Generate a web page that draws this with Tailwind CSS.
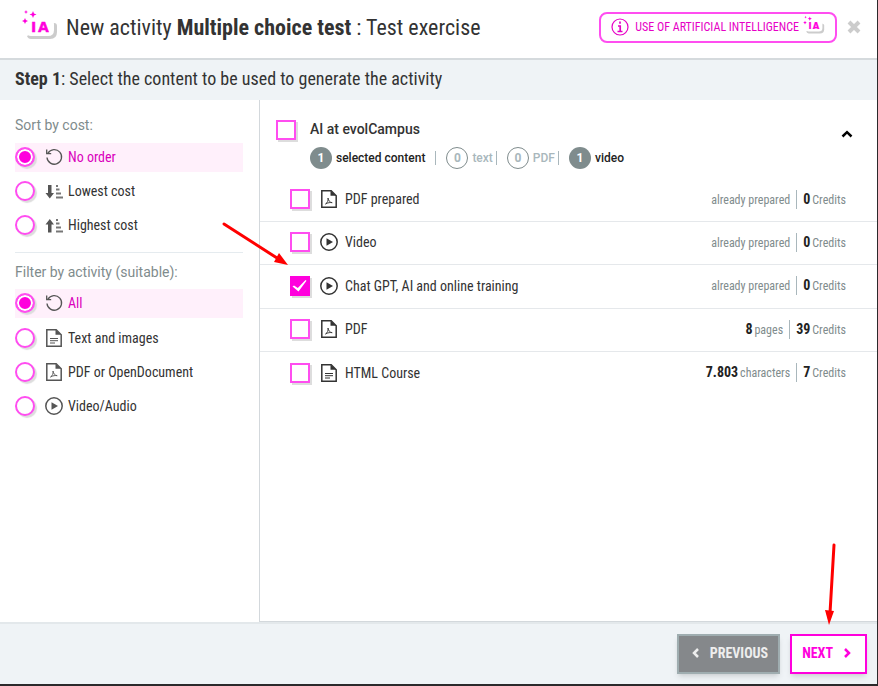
<!DOCTYPE html>
<html lang="en">

<head>
    <meta charset="UTF-8">
    <meta name="viewport" content="width=device-width, initial-scale=1.0">
    <script src="https://cdn.jsdelivr.net/npm/@tailwindcss/browser@4"></script>
    <title>New activity</title>
</head>

<body class="bg-[#2b292b] font-['Roboto_Condensed','Liberation_Sans_Narrow',Roboto,sans-serif] text-[#333]">
    <!-- shared icons -->
    <svg class="hidden">
        <symbol id="logo" viewBox="0 0 36 30">
            <path d="M29 13h3q3 0 3 3v6q0 7-7 7H9q-3 0-4-3z" fill="#ccc" />
            <path d="M9 11h20q3 0 3 3v6q0 6-6 6H9q-4 0-4-4v-7q0-4 4-4z" fill="#fff" />
            <path d="M11 1l1 2.500 2.500 1-2.500 1-1 2.500-1-2.500-2.500-1 2.500-1zM4 0l.6 1.400L6 2l-1.400.6L4 4l-.6-1.400L2 2l1.400-.6zM3 8l.9 2.100L6 11l-2.100.9L3 14l-.9-2.100L0 11l2.100-.9z" fill="#f0d" />
            <text y="22" class="font-['DejaVu_Sans'] font-bold text-[14px]" fill="#f0d" stroke="#f0d" stroke-width=".4"><tspan x="9">I</tspan><tspan x="16">A</tspan></text>
        </symbol>
        <symbol id="reset" viewBox="0 0 18 18" fill="none" stroke="currentColor" stroke-width="1.300">
            <path d="M3 5.200A7.300 7.300 0 1 1 2 9.500M1.700 1.500v4.200h4.500" />
        </symbol>
        <symbol id="down" viewBox="0 0 18 18" fill="currentColor">
            <path d="M3 3h3.500v8H9l-4.200 5.500L.5 11H3z" />
            <path d="M11 3h2v2h-2zM11 6.500h3.500v2H11zM11 10.500h5v2h-5zM11 14.500h7v2h-7z" fill-opacity=".8" />
        </symbol>
        <symbol id="up" viewBox="0 0 18 18" fill="currentColor">
            <path d="M3 16.500h3.500v-8H9L4.800 3 .5 8.500H3z" />
            <path d="M11 3h2v2h-2zM11 6.500h3.500v2H11zM11 10.500h5v2h-5zM11 14.500h7v2h-7z" fill-opacity=".8" />
        </symbol>
        <symbol id="doc" viewBox="0 0 18 18" fill="none" stroke="currentColor">
            <path d="M1.800.8h9.400l5 5v11.400H1.800z" stroke-width="1.500" />
            <path d="M10.500.8v5h5.700z" fill="currentColor" stroke="none" />
            <path d="M5 9.500h8M5 11.700h8M5 14h5" />
        </symbol>
        <symbol id="pdf" viewBox="0 0 18 18" fill="none" stroke="currentColor">
            <path d="M1.800.8h9.400l5 5v11.400H1.800z" stroke-width="1.500" />
            <path d="M10.500.8v5h5.700z" fill="currentColor" stroke="none" />
            <path d="M8 8c.6 2.800 1.600 4.200 4.200 4.700-2-.4-4.200-.1-6.700 1.300C7.400 12.800 8.400 10.800 8 8z" stroke-width=".9" />
        </symbol>
        <symbol id="play" viewBox="0 0 18 18">
            <circle cx="9" cy="9" r="8.200" fill="none" stroke="currentColor" stroke-width="1.500" />
            <path d="M6.500 5.200L13 9l-6.500 3.800z" fill="currentColor" />
        </symbol>
        <symbol id="tick" viewBox="0 0 20 20">
            <path d="M2.500 10.500l1.500-1 3.800 2.500L15.500 4l1 .8-8 10.700z" fill="#fff" />
        </symbol>
    </svg>

    <div class="flex flex-col min-h-screen pr-px pb-0.5">
        <header class="flex items-center h-15 pl-[22px] pr-4 bg-white border-b-2 border-[#d5dadd]">
            <svg class="w-9 h-[30px] mr-2 -mt-2"><use href="#logo" /></svg>
            <h1 class="text-[22px] leading-7 -mt-0.5">New activity <b>Multiple choice test</b> : Test exercise</h1>
            <button class="flex items-center h-[31px] ml-auto mr-2.5 -mt-1 px-2.5 border-2 border-[#ff4df0] rounded-lg text-xs text-[#e600c6]">
                <svg class="size-[18px] mr-1.5" viewBox="0 0 18 18" fill="none" stroke="currentColor">
                    <circle cx="9" cy="9" r="8" stroke-width="1.200" />
                    <path d="M9 3.500v2.300M7 8h2.200v5.500M6.500 13.500h5" stroke-width="1.700" />
                </svg>
                USE OF ARTIFICIAL INTELLIGENCE
                <svg class="w-[22px] h-[18px] ml-1 -mt-1"><use href="#logo" /></svg>
            </button>
            <button class="-mt-1" aria-label="Close">
                <svg class="size-[14px]" viewBox="0 0 14 14"><path d="M2 2l10 10M12 2L2 12" stroke="#ccc" stroke-width="4" /></svg>
            </button>
        </header>

        <div class="flex items-center h-10 px-[15px] pb-0.5 bg-[#eff3f6] text-lg">
            <p><b>Step 1</b>: Select the content to be used to generate the activity</p>
        </div>

        <div class="flex grow bg-white">
            <aside class="w-[260px] shrink-0 pl-[15px] pr-4 pt-[15px] border-r border-[#d3d8dc] text-sm">
                <fieldset class="flex flex-col gap-[5px] pb-3 border-b border-[#e5ebef]">
                    <legend class="mb-2 font-[Roboto] leading-5 text-[#7f8c8d]">Sort by cost:</legend>
                    <label class="flex items-center h-[29px] pb-0.5 has-checked:bg-[#fff0fb] has-checked:text-[#d900bb]">
                        <input type="radio" name="sort" checked class="appearance-none size-5 rounded-full bg-white border-2 border-[#ff4df0] shadow-[2px_2px_1px_#ddd] checked:bg-[#f0d] checked:shadow-[inset_0_0_0_2px_#fff,2px_2px_1px_#ddd]">
                        <svg class="size-[18px] ml-2.5 mr-[5px] text-[#555]"><use href="#reset" /></svg>
                        No order
                    </label>
                    <label class="flex items-center h-[29px] pb-0.5 has-checked:bg-[#fff0fb] has-checked:text-[#d900bb]">
                        <input type="radio" name="sort" class="appearance-none size-5 rounded-full bg-white border-2 border-[#ff4df0] shadow-[2px_2px_1px_#ddd] checked:bg-[#f0d] checked:shadow-[inset_0_0_0_2px_#fff,2px_2px_1px_#ddd]">
                        <svg class="size-[18px] ml-2.5 mr-[5px] text-[#555]"><use href="#down" /></svg>
                        Lowest cost
                    </label>
                    <label class="flex items-center h-[29px] pb-0.5 has-checked:bg-[#fff0fb] has-checked:text-[#d900bb]">
                        <input type="radio" name="sort" class="appearance-none size-5 rounded-full bg-white border-2 border-[#ff4df0] shadow-[2px_2px_1px_#ddd] checked:bg-[#f0d] checked:shadow-[inset_0_0_0_2px_#fff,2px_2px_1px_#ddd]">
                        <svg class="size-[18px] ml-2.5 mr-[5px] text-[#555]"><use href="#up" /></svg>
                        Highest cost
                    </label>
                </fieldset>
                <fieldset class="flex flex-col gap-[5px] pt-[7px]">
                    <legend class="pt-[9px] font-[Roboto] leading-5 text-[#7f8c8d]">Filter by activity (suitable):</legend>
                    <label class="flex items-center h-[29px] pb-0.5 has-checked:bg-[#fff0fb] has-checked:text-[#d900bb]">
                        <input type="radio" name="filter" checked class="appearance-none size-5 rounded-full bg-white border-2 border-[#ff4df0] shadow-[2px_2px_1px_#ddd] checked:bg-[#f0d] checked:shadow-[inset_0_0_0_2px_#fff,2px_2px_1px_#ddd]">
                        <svg class="size-[18px] ml-2.5 mr-[5px] text-[#555]"><use href="#reset" /></svg>
                        All
                    </label>
                    <label class="flex items-center h-[29px] has-checked:bg-[#fff0fb] has-checked:text-[#d900bb]">
                        <input type="radio" name="filter" class="appearance-none size-5 rounded-full bg-white border-2 border-[#ff4df0] shadow-[2px_2px_1px_#ddd] checked:bg-[#f0d] checked:shadow-[inset_0_0_0_2px_#fff,2px_2px_1px_#ddd]">
                        <svg class="size-[18px] ml-2.5 mr-[5px] text-[#555]"><use href="#doc" /></svg>
                        Text and images
                    </label>
                    <label class="flex items-center h-[29px] has-checked:bg-[#fff0fb] has-checked:text-[#d900bb]">
                        <input type="radio" name="filter" class="appearance-none size-5 rounded-full bg-white border-2 border-[#ff4df0] shadow-[2px_2px_1px_#ddd] checked:bg-[#f0d] checked:shadow-[inset_0_0_0_2px_#fff,2px_2px_1px_#ddd]">
                        <svg class="size-[18px] ml-2.5 mr-[5px] text-[#555]"><use href="#pdf" /></svg>
                        PDF or OpenDocument
                    </label>
                    <label class="flex items-center h-[29px] has-checked:bg-[#fff0fb] has-checked:text-[#d900bb]">
                        <input type="radio" name="filter" class="appearance-none size-5 rounded-full bg-white border-2 border-[#ff4df0] shadow-[2px_2px_1px_#ddd] checked:bg-[#f0d] checked:shadow-[inset_0_0_0_2px_#fff,2px_2px_1px_#ddd]">
                        <svg class="size-[18px] ml-2.5 mr-[5px] text-[#555]"><use href="#play" /></svg>
                        Video/Audio
                    </label>
                </fieldset>
            </aside>

            <main class="grow pt-5 border-b border-[#d3d8dc]">
                <div class="flex pl-4 pr-6 pb-2.5 font-[Roboto] font-medium">
                    <input id="course" type="checkbox" class="appearance-none size-5 mr-3.5 border-2 border-[#ff4df0] shadow-[2px_2px_0_#ddd] checked:bg-[#f0d]">
                    <div class="grow">
                        <label for="course" class="block text-sm leading-[18px]">AI at evolCampus</label>
                        <div class="flex items-center mt-[9px] text-xs text-[#222]">
                            <span class="flex items-center justify-center size-[22px] mr-1 rounded-full bg-[#7f8c8d] text-white font-bold">1</span>
                            selected content
                            <span class="w-px h-3.5 mx-2.5 bg-[#a9b7bc]"></span>
                            <span class="flex items-center justify-center size-[22px] mr-1 rounded-full border border-[#7f8c8d] text-[#a9b7bc] font-bold">0</span>
                            <span class="text-[#a9b7bc]">text</span>
                            <span class="w-px h-3.5 ml-[3px] mr-2.5 bg-[#a9b7bc]"></span>
                            <span class="flex items-center justify-center size-[22px] mr-1 rounded-full border border-[#7f8c8d] text-[#a9b7bc] font-bold">0</span>
                            <span class="text-[#a9b7bc]">PDF</span>
                            <span class="w-px h-3.5 ml-[3px] mr-2.5 bg-[#a9b7bc]"></span>
                            <span class="flex items-center justify-center size-[22px] mr-1 rounded-full bg-[#7f8c8d] text-white font-bold">1</span>
                            video
                        </div>
                    </div>
                    <button class="self-start mt-2" aria-label="Collapse">
                        <svg class="w-3 h-3" viewBox="0 0 12 12" fill="none"><path d="M1.500 8.500L6 4.200l4.500 4.300" stroke="#000" stroke-width="2.500" /></svg>
                    </button>
                </div>

                <ul class="text-sm">
                    <li class="flex items-center h-[43px] pb-0.5 pl-[30px] pr-[31px] border-b border-[#e5e8eb]">
                        <input id="c1" type="checkbox" class="appearance-none size-5 mr-2.5 border-2 border-[#ff4df0] shadow-[2px_2px_0_#ddd] checked:bg-[#f0d] checked:border-[#f0d]">
                        <svg class="size-[18px] mr-[7px]"><use href="#pdf" /></svg>
                        <label for="c1">PDF prepared</label>
                        <div class="flex items-baseline ml-auto text-xs leading-[18px] text-[#7f8c8d]">
                            <span>already prepared</span>
                            <span class="flex items-baseline gap-0.5 ml-1.5 pl-1.5 border-l border-[#a9b7bc]"><b class="text-sm leading-[18px] text-[#222]">0</b> Credits</span>
                        </div>
                    </li>
                    <li class="flex items-center h-[43px] pb-0.5 pl-[30px] pr-[31px] border-b border-[#e5e8eb]">
                        <input id="c2" type="checkbox" class="appearance-none size-5 mr-2.5 border-2 border-[#ff4df0] shadow-[2px_2px_0_#ddd] checked:bg-[#f0d] checked:border-[#f0d]">
                        <svg class="size-[18px] mr-[7px]"><use href="#play" /></svg>
                        <label for="c2">Video</label>
                        <div class="flex items-baseline ml-auto text-xs leading-[18px] text-[#7f8c8d]">
                            <span>already prepared</span>
                            <span class="flex items-baseline gap-0.5 ml-1.5 pl-1.5 border-l border-[#a9b7bc]"><b class="text-sm leading-[18px] text-[#222]">0</b> Credits</span>
                        </div>
                    </li>
                    <li class="flex items-center h-11 pb-0.5 pl-[30px] pr-[31px] border-b border-[#e5e8eb]">
                        <span class="grid mr-2.5">
                            <input id="c3" type="checkbox" checked class="peer col-start-1 row-start-1 appearance-none size-5 border-2 border-[#ff4df0] shadow-[2px_2px_0_#ddd] checked:bg-[#f0d] checked:border-[#f0d]">
                            <svg class="col-start-1 row-start-1 size-5 hidden peer-checked:block pointer-events-none"><use href="#tick" /></svg>
                        </span>
                        <svg class="size-[18px] mr-[7px]"><use href="#play" /></svg>
                        <label for="c3">Chat GPT, AI and online training</label>
                        <div class="flex items-baseline ml-auto text-xs leading-[18px] text-[#7f8c8d]">
                            <span>already prepared</span>
                            <span class="flex items-baseline gap-0.5 ml-1.5 pl-1.5 border-l border-[#a9b7bc]"><b class="text-sm leading-[18px] text-[#222]">0</b> Credits</span>
                        </div>
                    </li>
                    <li class="flex items-center h-[43px] pb-0.5 pl-[30px] pr-[31px] border-b border-[#e5e8eb]">
                        <input id="c4" type="checkbox" class="appearance-none size-5 mr-2.5 border-2 border-[#ff4df0] shadow-[2px_2px_0_#ddd] checked:bg-[#f0d] checked:border-[#f0d]">
                        <svg class="size-[18px] mr-[7px]"><use href="#pdf" /></svg>
                        <label for="c4">PDF</label>
                        <div class="flex items-baseline ml-auto text-xs leading-[18px] text-[#7f8c8d]">
                            <span class="flex items-baseline gap-0.5"><b class="text-sm leading-[18px] text-[#222]">8</b> pages</span>
                            <span class="flex items-baseline gap-0.5 ml-1.5 pl-1.5 border-l border-[#a9b7bc]"><b class="text-sm leading-[18px] text-[#222]">39</b> Credits</span>
                        </div>
                    </li>
                    <li class="flex items-center h-[43px] pb-0.5 pl-[30px] pr-[31px]">
                        <input id="c5" type="checkbox" class="appearance-none size-5 mr-2.5 border-2 border-[#ff4df0] shadow-[2px_2px_0_#ddd] checked:bg-[#f0d] checked:border-[#f0d]">
                        <svg class="size-[18px] mr-[7px]"><use href="#doc" /></svg>
                        <label for="c5">HTML Course</label>
                        <div class="flex items-baseline ml-auto text-xs leading-[18px] text-[#7f8c8d]">
                            <span class="flex items-baseline gap-0.5"><b class="text-sm leading-[18px] text-[#222]">7.803</b> characters</span>
                            <span class="flex items-baseline gap-0.5 ml-1.5 pl-1.5 border-l border-[#a9b7bc]"><b class="text-sm leading-[18px] text-[#222]">7</b> Credits</span>
                        </div>
                    </li>
                </ul>
            </main>
        </div>

        <footer class="flex justify-end gap-2.5 p-2.5 bg-[#eff3f6] border-t-2 border-[#e3e8eb] text-sm font-bold">
            <button class="flex items-center h-10 pl-3 pr-2.5 pb-0.5 gap-[9px] bg-[#85888b] border-2 border-[#9fadb0] text-[#eee] shadow-md">
                <svg class="size-2.5" viewBox="0 0 10 10" fill="none"><path d="M7 1L3 5l4 4" stroke="currentColor" stroke-width="2.500" /></svg>
                PREVIOUS
            </button>
            <button class="flex items-center h-10 pl-2.5 pr-[13px] pb-0.5 gap-[9px] bg-white border-2 border-[#f0d] text-[#f0d] shadow-md">
                NEXT
                <svg class="size-2.5" viewBox="0 0 10 10" fill="none"><path d="M3 1l4 4-4 4" stroke="currentColor" stroke-width="2.500" /></svg>
            </button>
        </footer>
    </div>

    <!-- pointer arrows over the page -->
    <svg class="absolute left-[220px] top-[220px] w-[70px] h-[48px] pointer-events-none" viewBox="0 0 70 48" fill="red">
        <path d="M4 4l53 34" stroke="red" stroke-width="3" stroke-linecap="round" />
        <path d="M68 45l-14-3 5-9z" />
    </svg>
    <svg class="absolute right-[40px] bottom-[60px] w-[16px] h-[85px] pointer-events-none" viewBox="0 0 16 85" fill="red">
        <path d="M12 4l-4 68" stroke="red" stroke-width="3" stroke-linecap="round" />
        <path d="M7 84L3 69l9 1z" />
    </svg>
</body>

</html>
